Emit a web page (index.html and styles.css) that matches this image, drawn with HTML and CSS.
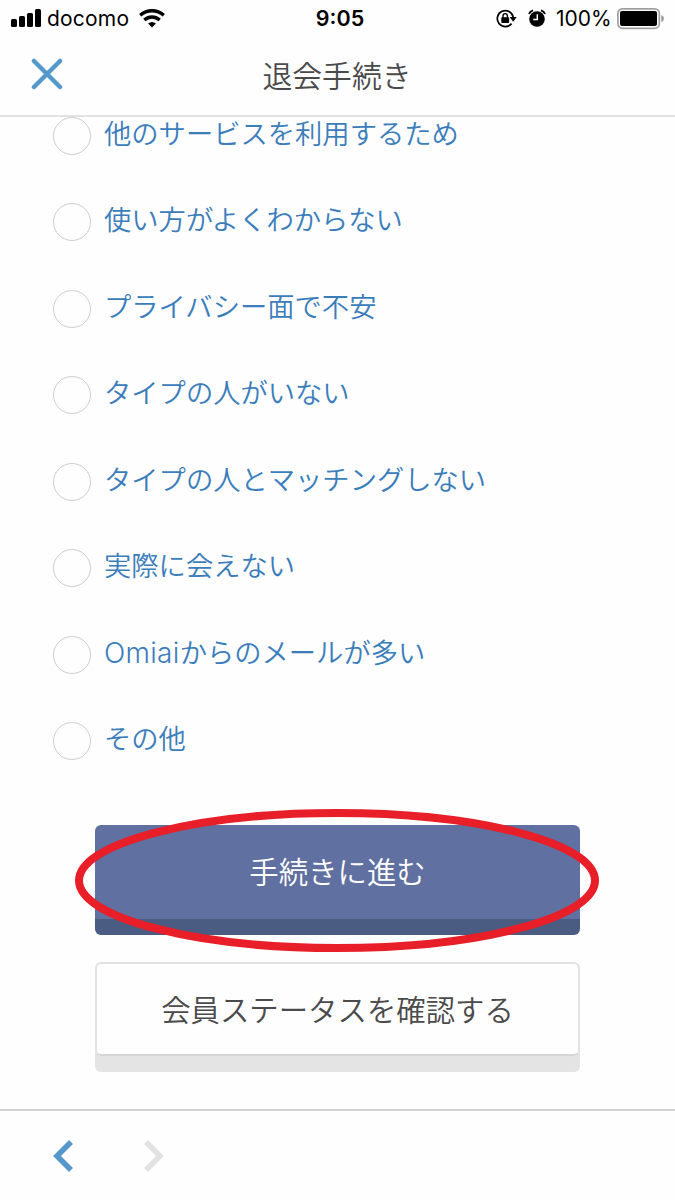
FILE: index.html
```html
<!DOCTYPE html>
<html lang="ja">
<head>
    <meta charset="utf-8">
    <meta name="viewport" content="width=device-width, initial-scale=1.0">
    <title>退会手続き</title>
    <link rel="stylesheet" href="styles.css">
</head>
<body>
    <div class="status">
        <div class="carrier">
            <svg width="31" height="19" viewBox="0 0 31 19">
                <rect x="0" y="10" width="6" height="8" rx="1.5"/>
                <rect x="8" y="7" width="6" height="11" rx="1.5"/>
                <rect x="16" y="4" width="6" height="14" rx="1.5"/>
                <rect x="24" y="0" width="6" height="18" rx="1.5"/>
            </svg>
            <span class="carrier-name">docomo</span>
            <svg width="26" height="19" viewBox="0 0 26 19">
                <g fill="none" stroke="#000" stroke-width="3.4">
                    <path d="M1.2 6.3Q6.4 1.7 13 1.7T24.8 6.3"/>
                    <path d="M5.3 11Q8.8 8 13 8T20.7 11"/>
                </g>
                <path d="M9.1 14.5Q13 11.4 16.9 14.5L13 18.4Z"/>
            </svg>
        </div>
        <div class="time">9:05</div>
        <div class="power">
            <svg class="lock" width="21" height="19" viewBox="0 0 21 19">
                <path d="M15.6 14.6A8 8 0 1 1 17.2 8.2" fill="none" stroke="#000" stroke-width="1.7"/>
                <path d="M13.6 8H20.7L17.2 12.7Z"/>
                <rect x="5.3" y="8.2" width="7.8" height="5.8" rx=".8"/>
                <path d="M7 9V6.8a2.2 2.2 0 0 1 4.4 0V9" fill="none" stroke="#000" stroke-width="1.4"/>
            </svg>
            <svg class="alarm" width="18" height="19" viewBox="0 0 18 19">
                <circle cx="9" cy="10" r="7.8"/>
                <path d="M1 5Q2 2.2 5 1.3M17 5Q16 2.2 13 1.3" fill="none" stroke="#000" stroke-width="1.8"/>
                <path d="M9.3 5.3V10.6H5.2" fill="none" stroke="#fff" stroke-width="1.5"/>
            </svg>
            <span class="percent">100%</span>
            <svg width="48" height="22" viewBox="0 0 48 22">
                <rect x=".9" y=".9" width="41.4" height="19.4" rx="4.5" fill="none" stroke="#a0a0a0" stroke-width="1.7"/>
                <rect x="3" y="3" width="37" height="15" rx="2"/>
                <path d="M44.3 7Q47 8 47 10.6T44.3 14.2Z" fill="#999"/>
            </svg>
        </div>
    </div>

    <div class="header">
        <svg class="close" width="32" height="32" viewBox="0 0 32 32">
            <path d="M3 3L29 29M29 3L3 29"/>
        </svg>
        <h1>退会手続き</h1>
    </div>

    <div class="page">
        <ul class="reasons">
            <li><i class="radio"></i><span>他のサービスを利用するため</span></li>
            <li><i class="radio"></i><span>使い方がよくわからない</span></li>
            <li><i class="radio"></i><span>プライバシー面で不安</span></li>
            <li><i class="radio"></i><span>タイプの人がいない</span></li>
            <li><i class="radio"></i><span>タイプの人とマッチングしない</span></li>
            <li><i class="radio"></i><span>実際に会えない</span></li>
            <li><i class="radio"></i><span><span class="latin">Omiai</span>からのメールが多い</span></li>
            <li><i class="radio"></i><span>その他</span></li>
        </ul>
        <div class="buttons">
            <div class="button primary">
                <span>手続きに進む</span>
                <svg class="mark" width="526" height="144" viewBox="0 0 526 144">
                    <ellipse cx="263" cy="72.5" rx="258" ry="67.5"/>
                </svg>
            </div>
            <div class="button plain"><span>会員ステータスを確認する</span></div>
        </div>
    </div>

    <div class="footer">
        <svg width="20" height="32" viewBox="0 0 20 32">
            <path class="prev" d="M18 2L4 16L18 30"/>
        </svg>
        <svg width="20" height="32" viewBox="0 0 20 32">
            <path class="next" d="M2 2L16 16L2 30"/>
        </svg>
    </div>
</body>
</html>
```

FILE: styles.css
```css
* {
    box-sizing: border-box;
}
body {
    margin: 0;
    height: 1200px;
    display: flex;
    flex-direction: column;
    overflow: hidden;
    background: #fefefe;
    color: #4a4a4a;
    font-family: "Noto Sans CJK JP", sans-serif;
    font-weight: 350;
}
svg {
    display: block;
    flex: none;
}
.status {
    height: 37px;
    padding: 0 10px 0 11px;
    display: grid;
    grid-template-columns: 1fr auto 1fr;
    align-items: center;
    color: #000;
    font-family: Inter, sans-serif;
    font-size: 21px;
    font-weight: 400;
    line-height: 37px;
}
.carrier, .power {
    display: flex;
    align-items: center;
}
.carrier-name {
    width: 82px;
    margin: 0 10px 0 5px;
    letter-spacing: 0.2px;
}
.time {
    padding-left: 4px;
    font-weight: 600;
    font-size: 21.5px;
}
.power {
    justify-content: flex-end;
}
.lock {
    margin-right: 11px;
}
.alarm {
    margin-right: 10px;
}
.percent {
    width: 55px;
    margin-right: 6px;
}
.header {
    height: 80px;
    flex: none;
    display: grid;
    grid-template-columns: 100px 1fr 100px;
    align-items: center;
    border-bottom: 2px solid #e2e2e2;
}
.close {
    margin-left: 31px;
    margin-top: -4px;
    fill: none;
    stroke: #5598cc;
    stroke-width: 4.5;
    stroke-linecap: round;
}
h1 {
    margin: 0 1px 3px 0;
    font-size: 29.8px;
    font-weight: 350;
    line-height: 75px;
    text-align: center;
}
.page {
    flex: 1;
}
.reasons {
    margin: 0;
    padding: 0 0 0 53px;
    list-style: none;
    color: #3b7dbb;
    font-size: 27.3px;
}
.reasons li {
    height: 86.43px;
    display: flex;
    align-items: flex-start;
    gap: 13px;
    line-height: 30px;
}
.latin {
    font-family: Inter, sans-serif;
    font-weight: 350;
    font-size: 28px;
    letter-spacing: 0.3px;
}
.radio {
    width: 38px;
    height: 38px;
    border: 1px solid #cfcfcf;
    border-radius: 50%;
}
.buttons {
    width: 485px;
    margin: 17px 0 0 95px;
    display: flex;
    flex-direction: column;
    gap: 27px;
}
.button {
    position: relative;
    height: 110px;
    border-radius: 6px;
    font-size: 29.4px;
    line-height: 90px;
    text-align: center;
}
.primary {
    background: #6070a0;
    border-bottom: 16px solid #4b5c83;
    color: #fff;
}
/* red ring drawn over the button */
.mark {
    position: absolute;
    left: -21px;
    top: -17px;
    fill: none;
    stroke: #e81e28;
    stroke-width: 8;
}
.plain {
    height: 94px;
    border: 2px solid #e2e2e2;
    border-bottom: 2px solid #d6d6d6;
    box-shadow: 0 16px 0 #e4e4e4;
    line-height: 88px;
}
.footer {
    height: 91px;
    flex: none;
    padding: 0 53px;
    display: flex;
    align-items: center;
    gap: 71px;
    border-top: 2px solid #d2d2d2;
}
.footer path {
    fill: none;
    stroke-width: 5.5;
}
.prev {
    stroke: #5598cc;
}
.next {
    stroke: #e2e2e2;
}
```
